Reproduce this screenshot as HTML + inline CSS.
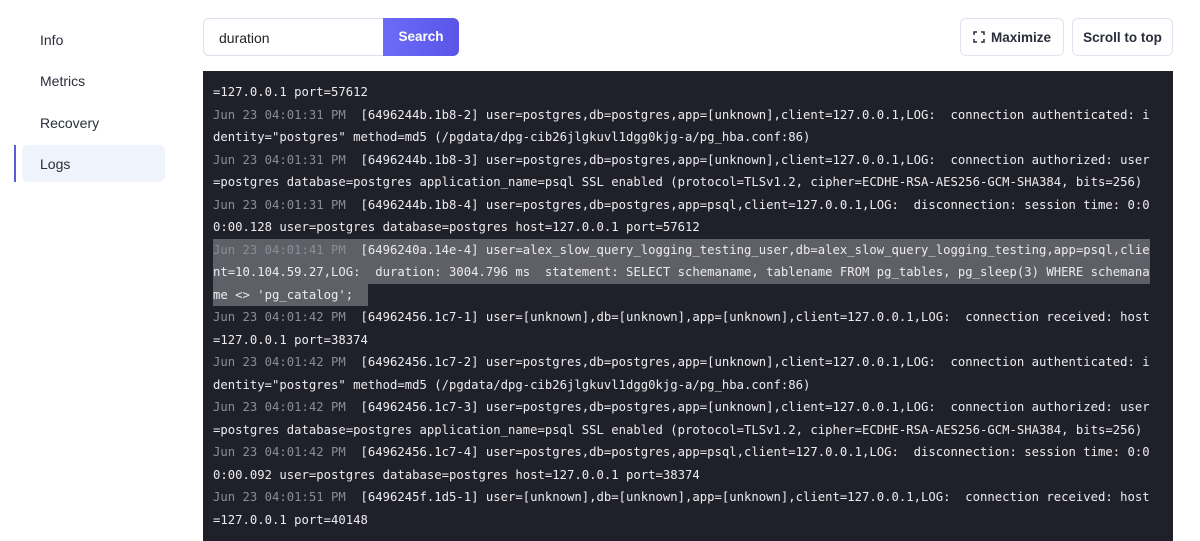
<!DOCTYPE html>
<html><head><meta charset="utf-8"><style>
*{box-sizing:border-box;margin:0;padding:0}
body{width:1200px;height:533px;overflow:hidden;background:#fff;font-family:"Liberation Sans",sans-serif;position:relative}
.nav{position:absolute;left:40px;font-size:14px;color:#2a2d3a}
.active{position:absolute;left:22px;top:145px;width:143px;height:37px;background:#eff3fc;border-radius:6px}
.bar{position:absolute;left:14px;top:145px;width:2px;height:37px;background:#5b5bd6}
.input{position:absolute;left:203px;top:18px;width:184px;height:38px;border:1px solid #dde1ee;border-radius:6px 0 0 6px;font-size:14px;color:#222;padding:11px 0 0 15px}
.btn{position:absolute;left:383px;top:18px;width:76px;height:38px;background:linear-gradient(90deg,#6b6cf7,#5a55e8);border-radius:0 6px 6px 0;color:#fff;font-weight:bold;font-size:13.5px;text-align:center;line-height:38px}
.ob{position:absolute;top:18px;height:38px;border:1px solid #dfe3f0;border-radius:6px;font-size:13.5px;font-weight:bold;color:#2a2d3a;line-height:38px;text-align:center}
.panel{position:absolute;left:203px;top:71px;width:970px;height:470px;background:#1f2029;padding:10px 0 0 10px}
.l{height:22.5px;line-height:22.5px;font-family:"DejaVu Sans Mono","Liberation Mono",monospace;font-size:12.25px;color:#ececef;white-space:pre}
.t{color:#8b8d95}
.h{background:#5e5f67;display:inline-block;height:22.5px;vertical-align:top}
</style></head><body>
<div class="active"></div><div class="bar"></div>
<div class="nav" style="top:32px">Info</div>
<div class="nav" style="top:73px">Metrics</div>
<div class="nav" style="top:115px">Recovery</div>
<div class="nav" style="top:156px">Logs</div>
<div class="input">duration</div>
<div class="btn">Search</div>
<div class="ob" style="left:960px;width:104px"><svg width="12" height="12" viewBox="0 0 12 12" style="vertical-align:-1px;margin-right:6px" fill="none" stroke="#2a2d3a" stroke-width="1.5"><path d="M1 4V1H4M8 1H11V4M11 8V11H8M4 11H1V8"/></svg>Maximize</div>
<div class="ob" style="left:1072px;width:101px">Scroll to top</div>
<div class="panel">
<div class="l">=127.0.0.1 port=57612</div>
<div class="l"><span class="t">Jun 23 04:01:31 PM</span>  [6496244b.1b8-2] user=postgres,db=postgres,app=[unknown],client=127.0.0.1,LOG:  connection authenticated: i</div>
<div class="l">dentity="postgres" method=md5 (/pgdata/dpg-cib26jlgkuvl1dgg0kjg-a/pg_hba.conf:86)</div>
<div class="l"><span class="t">Jun 23 04:01:31 PM</span>  [6496244b.1b8-3] user=postgres,db=postgres,app=[unknown],client=127.0.0.1,LOG:  connection authorized: user</div>
<div class="l">=postgres database=postgres application_name=psql SSL enabled (protocol=TLSv1.2, cipher=ECDHE-RSA-AES256-GCM-SHA384, bits=256)</div>
<div class="l"><span class="t">Jun 23 04:01:31 PM</span>  [6496244b.1b8-4] user=postgres,db=postgres,app=psql,client=127.0.0.1,LOG:  disconnection: session time: 0:0</div>
<div class="l">0:00.128 user=postgres database=postgres host=127.0.0.1 port=57612</div>
<div class="l"><span class="h"><span class="t">Jun 23 04:01:41 PM</span>  [6496240a.14e-4] user=alex_slow_query_logging_testing_user,db=alex_slow_query_logging_testing,app=psql,clie</span></div>
<div class="l"><span class="h">nt=10.104.59.27,LOG:  duration: 3004.796 ms  statement: SELECT schemaname, tablename FROM pg_tables, pg_sleep(3) WHERE schemana</span></div>
<div class="l"><span class="h">me &lt;&gt; 'pg_catalog';  </span></div>
<div class="l"><span class="t">Jun 23 04:01:42 PM</span>  [64962456.1c7-1] user=[unknown],db=[unknown],app=[unknown],client=127.0.0.1,LOG:  connection received: host</div>
<div class="l">=127.0.0.1 port=38374</div>
<div class="l"><span class="t">Jun 23 04:01:42 PM</span>  [64962456.1c7-2] user=postgres,db=postgres,app=[unknown],client=127.0.0.1,LOG:  connection authenticated: i</div>
<div class="l">dentity="postgres" method=md5 (/pgdata/dpg-cib26jlgkuvl1dgg0kjg-a/pg_hba.conf:86)</div>
<div class="l"><span class="t">Jun 23 04:01:42 PM</span>  [64962456.1c7-3] user=postgres,db=postgres,app=[unknown],client=127.0.0.1,LOG:  connection authorized: user</div>
<div class="l">=postgres database=postgres application_name=psql SSL enabled (protocol=TLSv1.2, cipher=ECDHE-RSA-AES256-GCM-SHA384, bits=256)</div>
<div class="l"><span class="t">Jun 23 04:01:42 PM</span>  [64962456.1c7-4] user=postgres,db=postgres,app=psql,client=127.0.0.1,LOG:  disconnection: session time: 0:0</div>
<div class="l">0:00.092 user=postgres database=postgres host=127.0.0.1 port=38374</div>
<div class="l"><span class="t">Jun 23 04:01:51 PM</span>  [6496245f.1d5-1] user=[unknown],db=[unknown],app=[unknown],client=127.0.0.1,LOG:  connection received: host</div>
<div class="l">=127.0.0.1 port=40148</div>
</div>
</body></html>
